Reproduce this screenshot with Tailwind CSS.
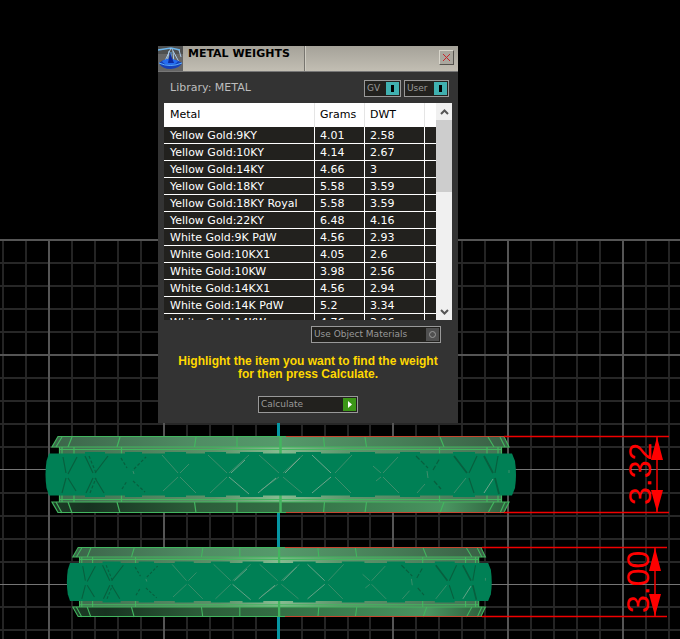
<!DOCTYPE html>
<html lang="en">
<head>
  <meta charset="UTF-8" />
  <meta name="viewport" content="width=device-width, initial-scale=1.0" />
  <title>Metal Weights</title>
  <script src="https://cdn.jsdelivr.net/npm/@tailwindcss/browser@4"></script>
</head>
<body class="bg-black">
  <main class="relative min-h-screen overflow-hidden font-['DejaVu_Sans',sans-serif] text-[11px]">

    <!-- Viewport canvas: grid, rings, dimensions -->
    <svg class="absolute inset-0 h-full w-full" aria-label="Ring side view">
      <defs>
        <linearGradient id="upper" x1="52" x2="509" y1="0" y2="0" gradientUnits="userSpaceOnUse">
          <stop offset="0" stop-color="#3b6449" />
          <stop offset="0.3" stop-color="#4f8c63" />
          <stop offset="0.5" stop-color="#559a6b" />
          <stop offset="0.75" stop-color="#478058" />
          <stop offset="1" stop-color="#3a5f45" />
        </linearGradient>
        <linearGradient id="inner" x1="59" x2="502" y1="0" y2="0" gradientUnits="userSpaceOnUse">
          <stop offset="0" stop-color="#416f50" />
          <stop offset="0.35" stop-color="#5c9269" />
          <stop offset="0.5" stop-color="#87bc91" />
          <stop offset="0.65" stop-color="#5e966c" />
          <stop offset="1" stop-color="#467455" />
        </linearGradient>
        <linearGradient id="lower" x1="52" x2="509" y1="0" y2="0" gradientUnits="userSpaceOnUse">
          <stop offset="0" stop-color="#1c3a25" />
          <stop offset="0.08" stop-color="#173220" />
          <stop offset="0.3" stop-color="#2b5b38" />
          <stop offset="0.6" stop-color="#37784a" />
          <stop offset="0.86" stop-color="#4a9460" />
          <stop offset="1" stop-color="#2c5d3b" />
        </linearGradient>
        <g id="ring">
          <path fill="url(#inner)" d="M59 447H502V503H59Z" />
          <path fill="url(#upper)" d="M58 437H504L509 447H52Z" />
          <path fill="url(#lower)" d="M52 502H509L504 513H58Z" />
          <g fill="none" stroke="#43b55f" stroke-width="1.2">
            <path d="M58 436.500H504L509 447H52ZM52 502H509L504 512.500H58Z" />
            <path d="M59.500 447V502M62 447V502M74 447V502M121.500 447V502M439.500 447V502M487 447V502M498 447V502M501.500 447V502M59 449.500H502M59 499.500H502" />
            <path d="M62 437L56 447M72 437L68 447M120 437L117 447M196 437L194.500 447M237 437V447M323.500 437L324.500 447M365 437L366.500 447M440 437L444 447M488 437L494 447M500 437L505 447" />
            <path d="M56 502L62 513M68 502L72 513M117 502L120 513M194.500 502L196 513M237 502V513M324.500 502L323.500 513M366.500 502L365 513M444 502L440 513M494 502L488 513M505 502L500 513" />
            <path stroke-width="2.500" d="M280.500 437V513" />
          </g>
          <path fill="#008055" d="M49 453.500H512L515 461Q517 475 515 488L512 495.500H49L46.500 488Q44.500 475 46.500 461Z" />
          <path stroke="#008055" stroke-width="2" d="M85 453H105M125 453H142M165 453H186M205 453H226M240 453H263M296 453H321M350 453H375M400 453H420M453 453H475M85 496H105M125 496H142M165 496H186M205 496H226M240 496H263M296 496H321M350 496H375M400 496H420M453 496H475" />
          <g fill="none" stroke="#075f3e" stroke-width="1.200">
            <path d="M63 457L66 473M77 457L68 474M62 493L66 478M68 478L76 491" />
            <path d="M85 456L93 473M108 456L95 473M86 493L93 478M95 478L104 493" />
            <path stroke-dasharray="3 2" d="M89 456L96 473M90 493L96 478M121 458L127 468M134 469L146 457M133 481L145 492M122 489L127 481" />
            <path stroke-dasharray="5 2" d="M416 456L428 468M433 470L440 458M434 481L441 489" />
            <path stroke-width="1.800" d="M454 456L467 473M484 456L493 473M495 478L499 494" />
            <path d="M477 456L469 473M469 478L474 493M498 456L495 473" />
          </g>
          <g fill="none" stroke="#3e8e6c">
            <path d="M162 455L178 473M180 473L189 464M163 491L178 477M180 477L196 493" />
            <path d="M373 466L381 473M383 473L398 457M376 481L381 477M383 477L399 493" />
            <path d="M208 455L227 473M229 473L249 455M210 493L227 477M259 455L279 473M283 473L303 455M261 490L279 477M283 477L302 493M335 473L352 455M335 477L351 493M133 471L134 474M427 471L428 478M417 493L425 484M454 493L466 478M509 470V473" />
          </g>
          <g fill="none" stroke="#6fa58b">
            <path d="M229 477L249 494M231 473L245 460M258 493L276 478M285 473L300 458M312 455L331 473M312 493L331 477M484 493L493 479" />
          </g>
        </g>
      </defs>

      <!-- minor grid -->
      <path fill="none" stroke="#242424" stroke-width="2" d="M3 240V1200M26 240V1200M72 240V1200M95 240V1200M118 240V1200M141 240V1200M187 240V1200M210 240V1200M233 240V1200M256 240V1200M302 240V1200M325 240V1200M348 240V1200M370 240V1200M416 240V1200M439 240V1200M462 240V1200M485 240V1200M531 240V1200M554 240V1200M577 240V1200M600 240V1200M646 240V1200M669 240V1200" />
      <path fill="none" stroke="#272727" stroke-width="2" d="M0 263H2000M0 286H2000M0 309H2000M0 332H2000M0 378H2000M0 401H2000M0 424H2000M0 447H2000M0 493H2000M0 516H2000M0 539H2000M0 562H2000M0 607H2000M0 630H2000" />
      <!-- major grid -->
      <path fill="none" stroke="#555" stroke-width="2" d="M49 240V1200M164 240V1200M393 240V1200M508 240V1200M623 240V1200M0 240H2000M0 355H2000" />
      <path fill="none" stroke="#757575" d="M0 469.500H2000M0 584.500H2000" />
      <path stroke="#0596a3" stroke-width="3" d="M278.500 240V1200" />

      <use href="#ring" />
      <use href="#ring" transform="translate(25.800 151.200) scale(0.903 0.908)" />

      <!-- dimensions -->
      <g fill="none" stroke="#c4472f">
        <path d="M286 436.500H504M286 512.500H504M285 547.500H482M285 616.500H482" />
      </g>
      <g fill="none" stroke="#f00000" stroke-width="1.500">
        <path d="M504 436.500H669M504 512.500H669M482 547.500H667M482 616.500H667M657 437V512M655 548V616" />
      </g>
      <g fill="#f00">
        <path d="M657 437L663 460H651ZM657 512L651 490H663ZM655 548L661 571H649ZM655 616L649 594H661Z" />
        <g class="font-['Liberation_Sans',sans-serif] text-[32px]">
          <text transform="translate(651 505) rotate(-90)">3.32</text>
          <text transform="translate(649 613) rotate(-90)">3.00</text>
        </g>
      </g>
    </svg>

    <!-- Metal Weights window -->
    <section class="absolute left-[158px] top-[46px] w-[300px] bg-[#333333] pb-[10px]">
      <header class="flex h-[26px] items-stretch border-b border-[#777] bg-gradient-to-b from-[#a5a299] to-[#c2beb3]">
        <svg class="h-[25px] w-[25px] bg-[#666]" viewBox="0 0 25 25" fill="none">
          <path fill="#4f5050" d="M0 0H25V8H0Z" />
          <path stroke="#6db7ee" stroke-width="1.500" d="M0 4L13 2L22 4" />
          <path stroke="#a9c9e8" d="M13 2L6 17M14 3L21 16M11 5L9 17M15 5L16 18M21 4L23 11" />
          <path fill="#1640b8" d="M1 17Q6 12 12 15Q18 12 24 17Q22 22 13 23Q4 23 1 17Z" />
          <path fill="#246cf0" d="M4 15Q11 10 20 15Q18 19 12 19Q6 19 4 15Z" />
          <path stroke="#5bb0ff" d="M1 17Q12 22 24 17M13 6V15" />
          <path fill="#0d2aa0" d="M12 7L16 17L10 17Z" />
        </svg>
        <h1 class="w-[122px] border-r border-[#77756f] pl-[5px] text-[11px] leading-[15px] font-bold text-black">METAL WEIGHTS</h1>
        <div class="flex flex-1 items-start justify-end border-l border-[#cfccc2] pt-1 pr-1">
          <button type="button" aria-label="Close" class="flex h-[15px] w-[15px] items-center justify-center border border-t-[#d8d5cb] border-r-[#55534e] border-b-[#55534e] border-l-[#d8d5cb] bg-[#aaa79e]">
            <svg class="h-[9px] w-[9px]" viewBox="0 0 9 9" stroke="#c8252c"><path d="M1 1L8 8M8 1L1 8" /></svg>
          </button>
        </div>
      </header>

      <div class="flex h-[31px] items-center pr-[9px] pl-3">
        <p class="flex-1 pt-px text-[11px] text-[#bdbdbd]">Library: METAL</p>
        <div class="flex gap-[3px] pt-[2px] text-[9px] text-[#999]">
          <button type="button" class="flex h-[17px] w-[37px] items-center justify-between border border-[#999] bg-[#22211e] pr-px pl-[2px]">GV
            <span class="flex h-[13px] w-[13px] items-center justify-center bg-[#40b0b0]"><span class="h-[7px] w-[3px] bg-black"></span></span>
          </button>
          <button type="button" class="flex h-[17px] w-[45px] items-center justify-between border border-[#999] bg-[#22211e] pr-px pl-[2px]">User
            <span class="flex h-[13px] w-[13px] items-center justify-center bg-[#40b0b0]"><span class="h-[7px] w-[3px] bg-black"></span></span>
          </button>
        </div>
      </div>

      <div class="mx-[6px] flex h-[217px] overflow-hidden">
        <div class="min-w-0 flex-1 overflow-hidden bg-white">
          <table class="w-full table-fixed border-separate border-spacing-0 text-left text-[11px] text-white">
            <colgroup>
              <col class="w-[151px]" />
              <col class="w-[50px]" />
              <col class="w-[60px]" />
              <col />
            </colgroup>
            <thead class="bg-white text-black">
              <tr class="h-6">
                <th class="border-r border-[#e5e5e5] p-0 pt-px pl-[6px] font-normal">Metal</th>
                <th class="border-r border-[#e5e5e5] p-0 pt-px pl-[5px] font-normal">Grams</th>
                <th class="border-r border-[#e5e5e5] p-0 pt-px pl-[5px] font-normal">DWT</th>
                <th class="p-0"></th>
              </tr>
            </thead>
            <tbody id="metals"></tbody>
          </table>
        </div>
        <!-- scrollbar -->
        <div class="flex w-4 flex-col items-center bg-[#f0f0f0]">
          <svg class="h-[17px] w-4" viewBox="0 0 16 17" fill="none" stroke="#555" stroke-width="2"><path d="M5 11L8.500 7.500L12 11" /></svg>
          <div class="h-[72px] w-full bg-[#cdcdcd]"></div>
          <svg class="mt-auto h-[17px] w-4" viewBox="0 0 16 17" fill="none" stroke="#555" stroke-width="2"><path d="M5 7L8.500 10.500L12 7" /></svg>
        </div>
      </div>

      <div class="mt-[6px] flex justify-end pr-[17px]">
        <button type="button" class="flex h-[17px] w-[130px] items-center justify-between border border-[#999] bg-[#22211e] pr-px pl-[2px] text-[9px] text-[#999]">Use Object Materials
          <span class="flex h-[13px] w-[13px] items-center justify-center bg-[#505050]"><span class="h-[7px] w-[7px] rounded-full border border-[#999]"></span></span>
        </button>
      </div>

      <p class="mt-3 text-center font-['Liberation_Sans',sans-serif] text-[12px] leading-[13px] font-bold text-[#ffd800]">Highlight the item you want to find the weight<br />for then press Calculate.</p>

      <div class="mt-[15px] flex justify-center">
        <button type="button" class="flex h-[17px] w-[100px] items-center justify-between border border-[#999] bg-[#22211e] pr-px pl-[2px] text-[9px] text-[#999]">Calculate
          <svg class="h-[13px] w-[13px] bg-[#3c9618]" viewBox="0 0 13 13"><path fill="#fff" d="M5 3L9 6.500L5 10Z" /></svg>
        </button>
      </div>
    </section>
  </main>

  <script>
    const metals = [
      ['Yellow Gold:9KY', '4.01', '2.58'],
      ['Yellow Gold:10KY', '4.14', '2.67'],
      ['Yellow Gold:14KY', '4.66', '3'],
      ['Yellow Gold:18KY', '5.58', '3.59'],
      ['Yellow Gold:18KY Royal', '5.58', '3.59'],
      ['Yellow Gold:22KY', '6.48', '4.16'],
      ['White Gold:9K PdW', '4.56', '2.93'],
      ['White Gold:10KX1', '4.05', '2.6'],
      ['White Gold:10KW', '3.98', '2.56'],
      ['White Gold:14KX1', '4.56', '2.94'],
      ['White Gold:14K PdW', '5.2', '3.34'],
      ['White Gold:14KW', '4.76', '3.06'],
    ];
    const cell = 'border-r border-b border-white p-0 pt-[2px] whitespace-nowrap leading-[14px]';
    document.getElementById('metals').innerHTML = metals.map(([name, grams, dwt]) => `
      <tr class="h-[17px] bg-[#22211e]">
        <td class="${cell} pl-[6px]">${name}</td>
        <td class="${cell} pl-[5px]">${grams}</td>
        <td class="${cell} pl-[5px]">${dwt}</td>
        <td class="border-b border-white p-0"></td>
      </tr>`).join('');
  </script>
</body>
</html>
